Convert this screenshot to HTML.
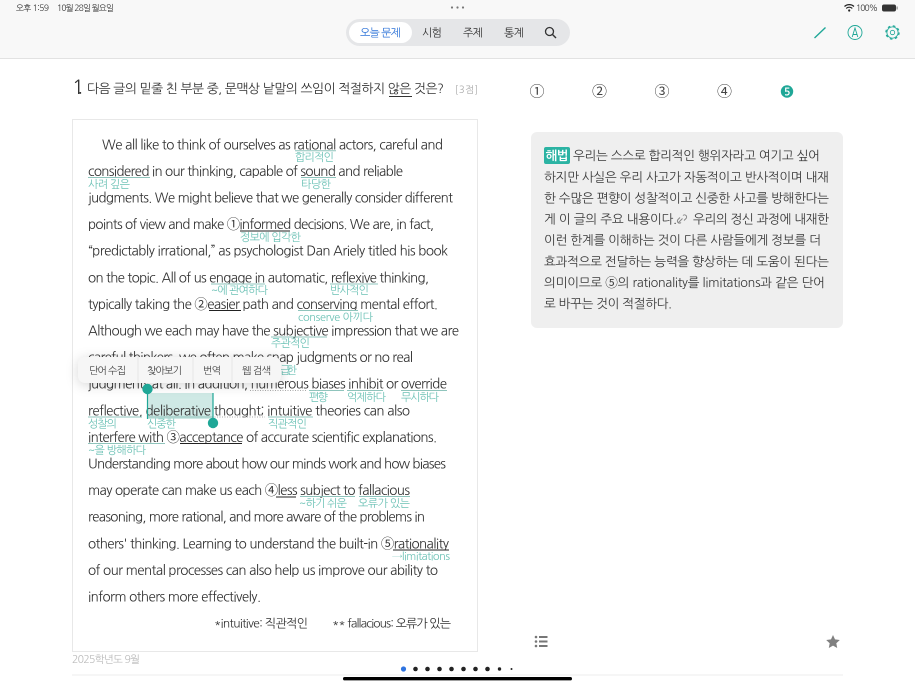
<!DOCTYPE html>
<html lang="ko"><head><meta charset="utf-8"><title>문제</title>
<style>
html,body{margin:0;padding:0;background:#fff;width:915px;height:686px;overflow:hidden}
svg{display:block;font-family:"NanumGothic","Liberation Sans","Noto Sans CJK KR",sans-serif}
.p text{font-size:13.4px;fill:#333}
.a text{font-size:11px;fill:#6dc2b6}
.e text{font-size:12.6px;fill:#3a3a3a}
.u line{stroke:#8fc4bc;stroke-width:1}
.k line{stroke:#222;stroke-width:1.1}
.d line{stroke:#aaa;stroke-width:1;stroke-dasharray:1 1.5}
.m text{font-size:10px;fill:#444}
.s text{font-size:8.5px;fill:#333}
.t text{font-size:11px;fill:#333}
.c text{font-size:15px;fill:#444}
</style></head><body>
<svg width="915" height="686" viewBox="0 0 915 686" xmlns="http://www.w3.org/2000/svg">
<rect width="915" height="58" fill="#f8f8f8"/>
<line x1="0" y1="58.5" x2="915" y2="58.5" stroke="#e2e2e2"/>
<g class="s">
<text x="16" y="11" textLength="33">오후 1:59</text>
<text x="57" y="11" textLength="57">10월 28일 월요일</text>
<text x="856" y="11" textLength="22">100%</text>
</g>
<g fill="#777"><circle cx="452" cy="7.5" r="1.1"/><circle cx="457.5" cy="7.5" r="1.1"/><circle cx="463" cy="7.5" r="1.1"/></g>
<path d="M844.5 6.5a7 7 0 0 1 9.5 0M846.2 8.4a4.4 4.4 0 0 1 6.1 0" fill="none" stroke="#222" stroke-width="1.2"/><circle cx="849.2" cy="10.5" r="1.1" fill="#222"/>
<rect x="882" y="4.5" width="14" height="7" rx="2" fill="#333"/><rect x="896.5" y="6.5" width="1.2" height="3" fill="#888"/>

<rect x="346" y="19" width="224" height="27" rx="13.5" fill="#e5e6e8"/>
<rect x="349" y="22" width="63" height="21" rx="10.5" fill="#fff"/>
<g class="t">
<text x="360" y="36.5" textLength="41" style="fill:#2f74d8">오늘 문제</text>
<text x="422" y="36.5" textLength="20">시험</text>
<text x="463" y="36.5" textLength="20">주제</text>
<text x="504" y="36.5" textLength="20">통계</text>
</g>
<circle cx="549.5" cy="31.5" r="4" fill="none" stroke="#333" stroke-width="1.3"/><line x1="552.5" y1="34.5" x2="556" y2="38" stroke="#333" stroke-width="1.4"/>

<path d="M814.5 38L825.5 27.5" stroke="#1fa797" stroke-width="1.4" fill="none"/>
<circle cx="855" cy="32.5" r="7" fill="none" stroke="#1fa797" stroke-width=".9"/>
<path d="M852.2 37L855 28L857.8 37M853 34.5h4" fill="none" stroke="#1fa797" stroke-width=".9"/>
<circle cx="892.5" cy="32.5" r="2.2" fill="none" stroke="#1fa797" stroke-width=".8"/>
<circle cx="892.5" cy="32.5" r="5.6" fill="none" stroke="#1fa797" stroke-width=".8"/>
<circle cx="892.5" cy="32.5" r="6.6" fill="none" stroke="#1fa797" stroke-width="1.2" stroke-dasharray="2.6 2.6"/>

<text x="72" y="94" font-size="20" fill="#333">1</text>
<rect x="79.5" y="92" width="1.6" height="1.8" fill="#333"/>
<text x="87" y="93" font-size="12.8" fill="#333" textLength="357">다음 글의 밑줄 친 부분 중, 문맥상 낱말의 쓰임이 적절하지 않은 것은?</text>
<line x1="389" y1="96.5" x2="412" y2="96.5" stroke="#333"/>
<text x="455" y="93" font-size="9.5" fill="#aaa" textLength="23">[3점]</text>
<g class="c">
<text x="529.5" y="96.5" textLength="14">①</text>
<text x="592" y="96.5" textLength="14">②</text>
<text x="654.5" y="96.5" textLength="14">③</text>
<text x="717" y="96.5" textLength="14">④</text>
</g>
<circle cx="787" cy="91.5" r="6.2" fill="#1fa797"/>
<text x="784" y="95.5" font-size="10.5" font-weight="bold" fill="#fff">5</text>

<rect x="72.5" y="119.5" width="405" height="532" fill="#fff" stroke="#e8e8e8"/>

<rect x="147" y="393" width="66" height="26" fill="#cfe9e5"/>

<g class="p">
<text x="102" y="149.3" textLength="341">We all like to think of ourselves as rational actors, careful and</text>
<text x="88" y="175.9" textLength="315">considered in our thinking, capable of sound and reliable</text>
<text x="88" y="202.5" textLength="365">judgments. We might believe that we generally consider different</text>
<text x="88" y="229.1" textLength="346">points of view and make ①informed decisions. We are, in fact,</text>
<text x="88" y="255.7" textLength="360">“predictably irrational,” as psychologist Dan Ariely titled his book</text>
<text x="88" y="282.3" textLength="341">on the topic. All of us engage in automatic, reflexive thinking,</text>
<text x="88" y="308.9" textLength="350">typically taking the ②easier path and conserving mental effort.</text>
<text x="88" y="335.5" textLength="371">Although we each may have the subjective impression that we are</text>
<text x="88" y="362.1" textLength="325">careful thinkers, we often make snap judgments or no real</text>
<text x="88" y="388.7" textLength="359">judgments at all. In addition, numerous biases inhibit or override</text>
<text x="88" y="415.3" textLength="322">reflective, deliberative thought; intuitive theories can also</text>
<text x="88" y="441.9" textLength="349">interfere with ③acceptance of accurate scientific explanations.</text>
<text x="88" y="468.5" textLength="358">Understanding more about how our minds work and how biases</text>
<text x="88" y="495.1" textLength="322">may operate can make us each ④less subject to fallacious</text>
<text x="88" y="521.7" textLength="337">reasoning, more rational, and more aware of the problems in</text>
<text x="88" y="548.3" textLength="361">others' thinking. Learning to understand the built-in ⑤rationality</text>
<text x="88" y="574.9" textLength="350">of our mental processes can also help us improve our ability to</text>
<text x="88" y="601.5" textLength="173">inform others more effectively.</text>
<text x="214" y="627.5" textLength="94" style="font-size:12px">*intuitive: 직관적인</text>
<text x="332" y="627.5" textLength="119" style="font-size:12px">** fallacious: 오류가 있는</text>
</g>

<g class="u">
<line x1="295" y1="150.8" x2="336" y2="150.8"/>
<line x1="88" y1="177.5" x2="150" y2="177.5"/>
<line x1="301" y1="177.5" x2="336" y2="177.5"/>
<line x1="211" y1="284" x2="265" y2="284"/>
<line x1="330" y1="284" x2="378" y2="284"/>
<line x1="298" y1="310.5" x2="358" y2="310.5"/>
<line x1="271" y1="337" x2="327" y2="337"/>
<line x1="309" y1="390.5" x2="344" y2="390.5"/>
<line x1="347" y1="390.5" x2="383" y2="390.5"/>
<line x1="401" y1="390.5" x2="447" y2="390.5"/>
<line x1="88" y1="417" x2="142" y2="417"/>
<line x1="147" y1="417" x2="212" y2="417"/>
<line x1="268" y1="417" x2="313" y2="417"/>
<line x1="88" y1="443.5" x2="165" y2="443.5"/>
<line x1="300" y1="496.5" x2="355" y2="496.5"/>
<line x1="359" y1="496.5" x2="410" y2="496.5"/>
</g>
<g class="d">
<line x1="250" y1="390.5" x2="306" y2="390.5"/>
<line x1="212" y1="417" x2="265" y2="417"/>
</g>
<g class="k">
<line x1="240" y1="231" x2="290" y2="231"/>
<line x1="209" y1="310.5" x2="241" y2="310.5"/>
<line x1="180" y1="443.5" x2="242" y2="443.5"/>
<line x1="276" y1="497" x2="296" y2="497"/>
<line x1="393" y1="550" x2="449" y2="550"/>
</g>

<g class="a">
<text x="295" y="161" textLength="39">합리적인</text>
<text x="88" y="188" textLength="42">사려 깊은</text>
<text x="301" y="188" textLength="30">타당한</text>
<text x="240" y="241" textLength="61">정보에 입각한</text>
<text x="211" y="294" textLength="57">~에 관여하다</text>
<text x="330" y="294" textLength="39">반사적인</text>
<text x="298" y="321" textLength="75">conserve 아끼다</text>
<text x="271" y="347" textLength="39">주관적인</text>
<text x="280" y="374" textLength="17">급한</text>
<text x="309" y="401" textLength="19">편향</text>
<text x="347" y="401" textLength="39">억제하다</text>
<text x="401" y="401" textLength="38">무시하다</text>
<text x="88" y="427.5" textLength="29">성찰의</text>
<text x="147" y="427.5" textLength="29">신중한</text>
<text x="268" y="427.5" textLength="39">직관적인</text>
<text x="88" y="454" textLength="58">~을 방해하다</text>
<text x="299" y="507" textLength="48">~하기 쉬운</text>
<text x="358" y="507" textLength="52">오류가 있는</text>
<text x="392" y="560" textLength="58">→limitations</text>
</g>

<rect x="78" y="357" width="203" height="26" rx="7" fill="#f6f6f6" style="filter:drop-shadow(0 2px 6px rgba(0,0,0,.16))"/>
<g stroke="#e6e6e6"><line x1="138" y1="357" x2="138" y2="383"/><line x1="193" y1="357" x2="193" y2="383"/><line x1="232" y1="357" x2="232" y2="383"/></g>
<g class="m">
<text x="89" y="374" textLength="37">단어 수집</text>
<text x="147" y="374" textLength="35">찾아보기</text>
<text x="203" y="374" textLength="18">번역</text>
<text x="242" y="374" textLength="29">웹 검색</text>
</g>

<line x1="147.5" y1="389" x2="147.5" y2="419" stroke="#1fa797" stroke-width="1.2"/>
<circle cx="147.5" cy="389" r="5.2" fill="#1fa797"/>
<line x1="213" y1="393" x2="213" y2="423" stroke="#1fa797" stroke-width="1.2"/>
<circle cx="213" cy="423" r="5.2" fill="#1fa797"/>

<text x="72" y="663" font-size="10.5" fill="#bbb" textLength="68">2025학년도 9월</text>

<rect x="531" y="132" width="312" height="196" rx="6" fill="#efefef"/>
<rect x="544" y="147" width="26" height="17" rx="2" fill="#2bb3a3"/>
<text x="545.5" y="160" font-size="12.4" font-weight="bold" fill="#fff" textLength="23">해법</text>
<g class="e">
<text x="573" y="160" textLength="247">우리는 스스로 합리적인 행위자라고 여기고 싶어</text>
<text x="544" y="181.5" textLength="285">하지만 사실은 우리 사고가 자동적이고 반사적이며 내재</text>
<text x="544" y="202.5" textLength="285">한 수많은 편향이 성찰적이고 신중한 사고를 방해한다는</text>
<text x="544" y="223.5" textLength="133">게 이 글의 주요 내용이다.</text>
<text x="693" y="223.5" textLength="136">우리의 정신 과정에 내재한</text>
<text x="544" y="244.5" textLength="277">이런 한계를 이해하는 것이 다른 사람들에게 정보를 더</text>
<text x="544" y="266" textLength="285">효과적으로 전달하는 능력을 향상하는 데 도움이 된다는</text>
<text x="544" y="287" textLength="281">의미이므로 ⑤의 rationality를 limitations과 같은 단어</text>
<text x="544" y="308" textLength="128">로 바꾸는 것이 적절하다.</text>
</g>
<path d="M678.5 222.5l4-4M681 222.5a2 2 0 0 1-3-3l2-2M683 215.5a2 2 0 0 1 3 3l-2 2" fill="none" stroke="#888" stroke-width="1"/>

<g fill="#777"><circle cx="536" cy="637" r="1.3"/><circle cx="536" cy="641.5" r="1.3"/><circle cx="536" cy="646" r="1.3"/>
<rect x="539" y="636" width="8.5" height="2"/><rect x="539" y="640.5" width="8.5" height="2"/><rect x="539" y="645" width="8.5" height="2"/></g>
<path d="M833 635l2 4.4 4.8.6-3.5 3.3.9 4.7-4.2-2.4-4.2 2.4.9-4.7-3.5-3.3 4.8-.6z" fill="#808080"/>

<line x1="72" y1="675" x2="843" y2="675" stroke="#eee"/>
<circle cx="403.5" cy="669" r="2.6" fill="#2f74e0"/>
<g fill="#222">
<circle cx="415.5" cy="669" r="2.3"/><circle cx="427.5" cy="669" r="2.3"/><circle cx="439.5" cy="669" r="2.3"/><circle cx="451.5" cy="669" r="2.3"/><circle cx="463.5" cy="669" r="2.3"/><circle cx="475.5" cy="669" r="2.3"/><circle cx="487.5" cy="669" r="2.3"/><circle cx="499.5" cy="669" r="1.7"/><circle cx="511.5" cy="669" r="1"/>
</g>
<rect x="343" y="677" width="229" height="3.4" rx="1.7" fill="#000"/>
</svg>
</body></html>
